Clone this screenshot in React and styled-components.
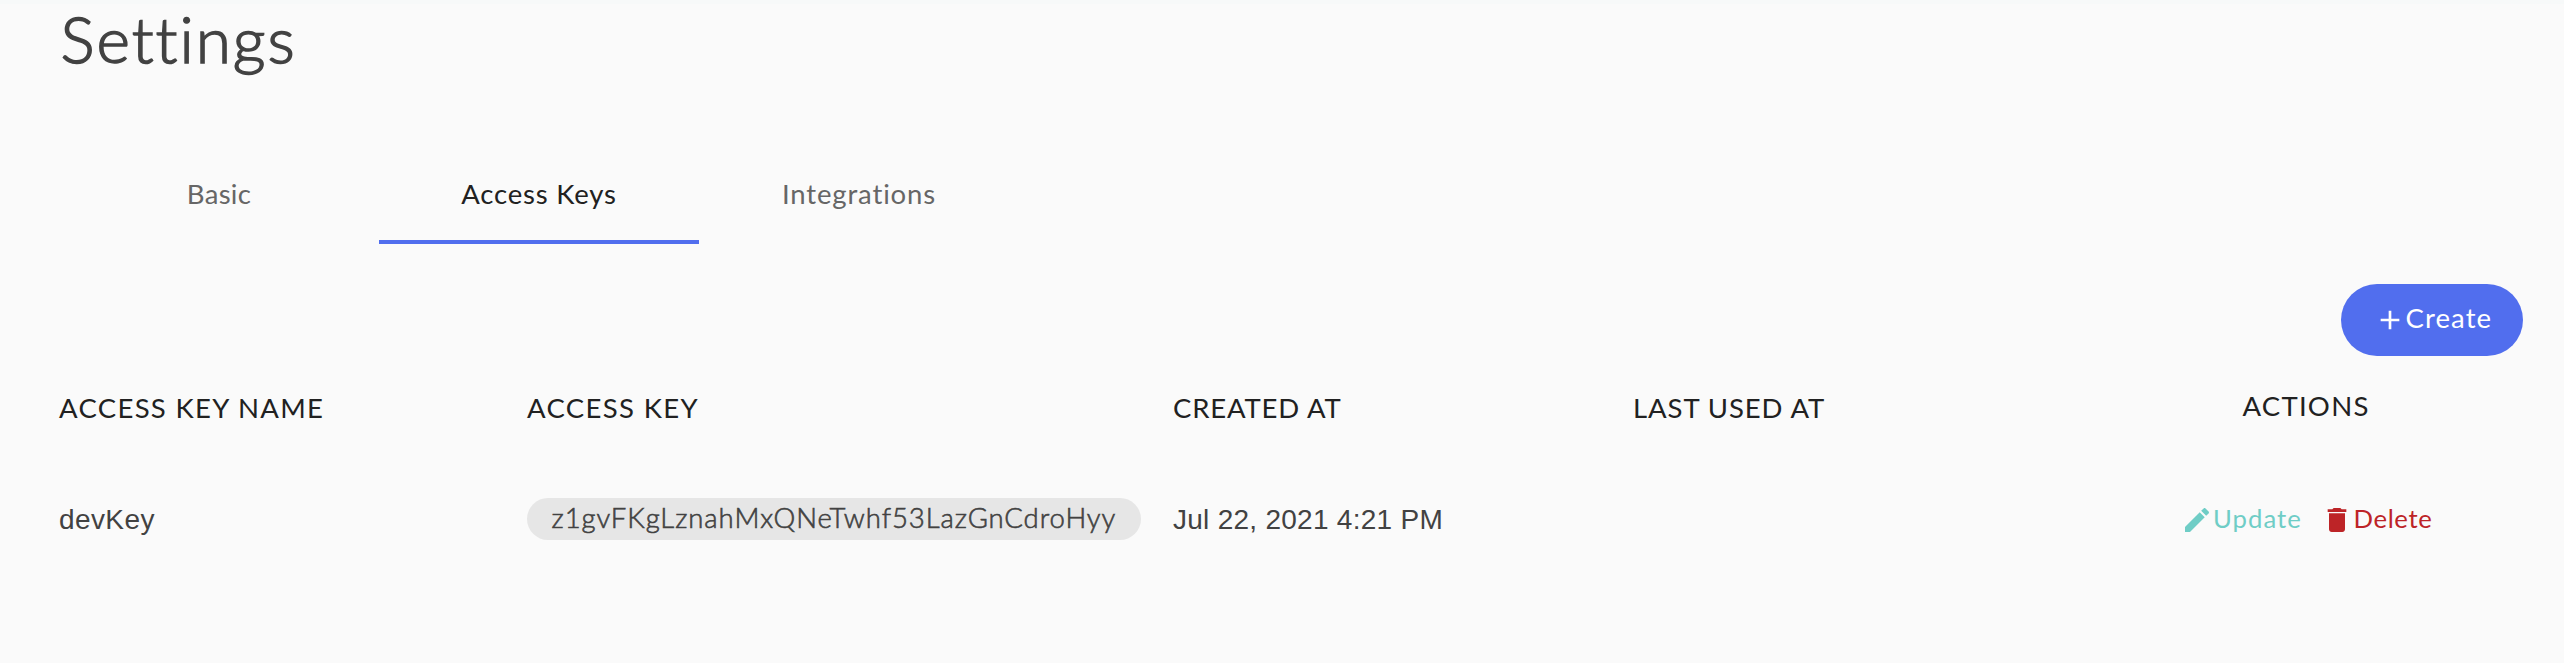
import React from 'react';
import styled, { createGlobalStyle } from 'styled-components';

const GlobalStyle = createGlobalStyle`
  * { box-sizing: border-box; }
  body { margin: 0; background: #fafafa; font-family: Lato, sans-serif; color: #212121; }
`;

const Page = styled.main`
  width: 2564px;
  height: 663px;
  overflow: hidden;
  border-top: 4px solid #f7f9f9;
  background: #fafafa;
`;

const Title = styled.h1`
  margin: 0;
  padding-left: 60.5px;
  font-size: 64px;
  line-height: 70px;
  font-weight: 300;
  letter-spacing: 1.98px;
  color: #424242;
  -webkit-text-stroke: 1.5px #424242;
`;

const Tabs = styled.nav`
  display: flex;
  margin: 74px 0 0 59px;
`;

const Tab = styled.button`
  width: 320px;
  height: 96px;
  padding: 0 0 1px;
  border: 0;
  border-bottom: 4px solid ${(p) => (p.$active ? '#516eee' : 'transparent')};
  background: none;
  font: 400 27.5px Lato, sans-serif;
  letter-spacing: ${(p) => p.$spacing}px;
  color: ${(p) => (p.$active ? '#212121' : '#666')};
`;

const Toolbar = styled.div`
  display: flex;
  justify-content: flex-end;
  padding: 40px 41px 0 0;
`;

const CreateButton = styled.button`
  display: flex;
  align-items: center;
  width: 182px;
  height: 72px;
  padding: 0 0 0 32.5px;
  border: 0;
  border-radius: 36px;
  background: #516eee;
  color: #fff;
  font: 400 27.5px Lato, sans-serif;
  letter-spacing: 1.1px;
`;

const Icon = styled.svg`
  flex: none;
  width: 32px;
  height: 32px;
  fill: currentColor;
`;

const Label = styled.span`
  padding-bottom: ${(p) => p.$lift}px;
`;

const Row = styled.div`
  display: grid;
  grid-template-columns: 468px 646px 460px 456px 434px;
  align-items: center;
  height: ${(p) => p.$height}px;
  margin-left: 59px;
`;

const HeadCell = styled.div`
  padding-bottom: ${(p) => (p.$center ? 5 : 1)}px;
  text-align: ${(p) => (p.$center ? 'center' : 'left')};
  font-size: 27.5px;
  letter-spacing: ${(p) => p.$spacing}px;
  white-space: nowrap;
`;

const Cell = styled.div`
  font-family: "Liberation Sans", sans-serif;
  font-size: 28px;
  letter-spacing: ${(p) => p.$spacing || 0}px;
  color: #424242;
  white-space: nowrap;
`;

const KeyChip = styled.div`
  width: 614px;
  height: 42px;
  margin-top: -2px;
  padding-left: 24.5px;
  border-radius: 21px;
  background: #e6e6e6;
  color: #424242;
  font-size: 27.5px;
  font-weight: 300;
  line-height: 39px;
  letter-spacing: 0.93px;
  white-space: nowrap;
  -webkit-text-stroke: 0.6px #424242;
`;

const Actions = styled.div`
  display: flex;
  justify-content: center;
  gap: 19.5px;
  padding-left: 1.5px;
`;

const Action = styled.button`
  display: flex;
  align-items: center;
  padding: 0;
  border: 0;
  background: none;
  font: 400 25.7px Lato, sans-serif;
  letter-spacing: ${(p) => p.$spacing}px;
  color: ${(p) => p.$color};
`;

const AddIcon = () => (
  <Icon viewBox="0 0 24 24"><path d="M19 13h-6v6h-2v-6H5v-2h6V5h2v6h6v2z" /></Icon>
);
const EditIcon = () => (
  <Icon viewBox="0 0 24 24">
    <path d="M3 17.25V21h3.75L17.81 9.94l-3.75-3.75L3 17.25zM20.71 7.04c.39-.39.39-1.02 0-1.41l-2.34-2.34c-.39-.39-1.02-.39-1.41 0l-1.83 1.83 3.75 3.75 1.83-1.83z" />
  </Icon>
);
const DeleteIcon = () => (
  <Icon viewBox="0 0 24 24">
    <path d="M6 19c0 1.1.9 2 2 2h8c1.1 0 2-.9 2-2V7H6v12zM19 4h-3.5l-1-1h-5l-1 1H5v2h14V4z" />
  </Icon>
);

export default function App() {
  return (
    <>
      <GlobalStyle />
      <Page>
        <Title>Settings</Title>
        <Tabs>
          <Tab $spacing={0.32}>Basic</Tab>
          <Tab $active $spacing={0.82}>Access Keys</Tab>
          <Tab $spacing={0.84}>Integrations</Tab>
        </Tabs>
        <Toolbar>
          <CreateButton><AddIcon /><Label $lift={5}>Create</Label></CreateButton>
        </Toolbar>
        <Row $height={104}>
          <HeadCell $spacing={1.32}>ACCESS KEY NAME</HeadCell>
          <HeadCell $spacing={1.35}>ACCESS KEY</HeadCell>
          <HeadCell $spacing={0.84}>CREATED AT</HeadCell>
          <HeadCell $spacing={0.93}>LAST USED AT</HeadCell>
          <HeadCell $center $spacing={1.26}>ACTIONS</HeadCell>
        </Row>
        <Row $height={120}>
          <Cell $spacing={0.4}>devKey</Cell>
          <KeyChip>z1gvFKgLznahMxQNeTwhf53LazGnCdroHyy</KeyChip>
          <Cell $spacing={0.27}>Jul 22, 2021 4:21 PM</Cell>
          <Cell />
          <Actions>
            <Action $color="#6fcdc6" $spacing={1.05}><EditIcon /><Label $lift={4}>Update</Label></Action>
            <Action $color="#bd2427" $spacing={0.66}><DeleteIcon /><Label $lift={4}>Delete</Label></Action>
          </Actions>
        </Row>
      </Page>
    </>
  );
}
